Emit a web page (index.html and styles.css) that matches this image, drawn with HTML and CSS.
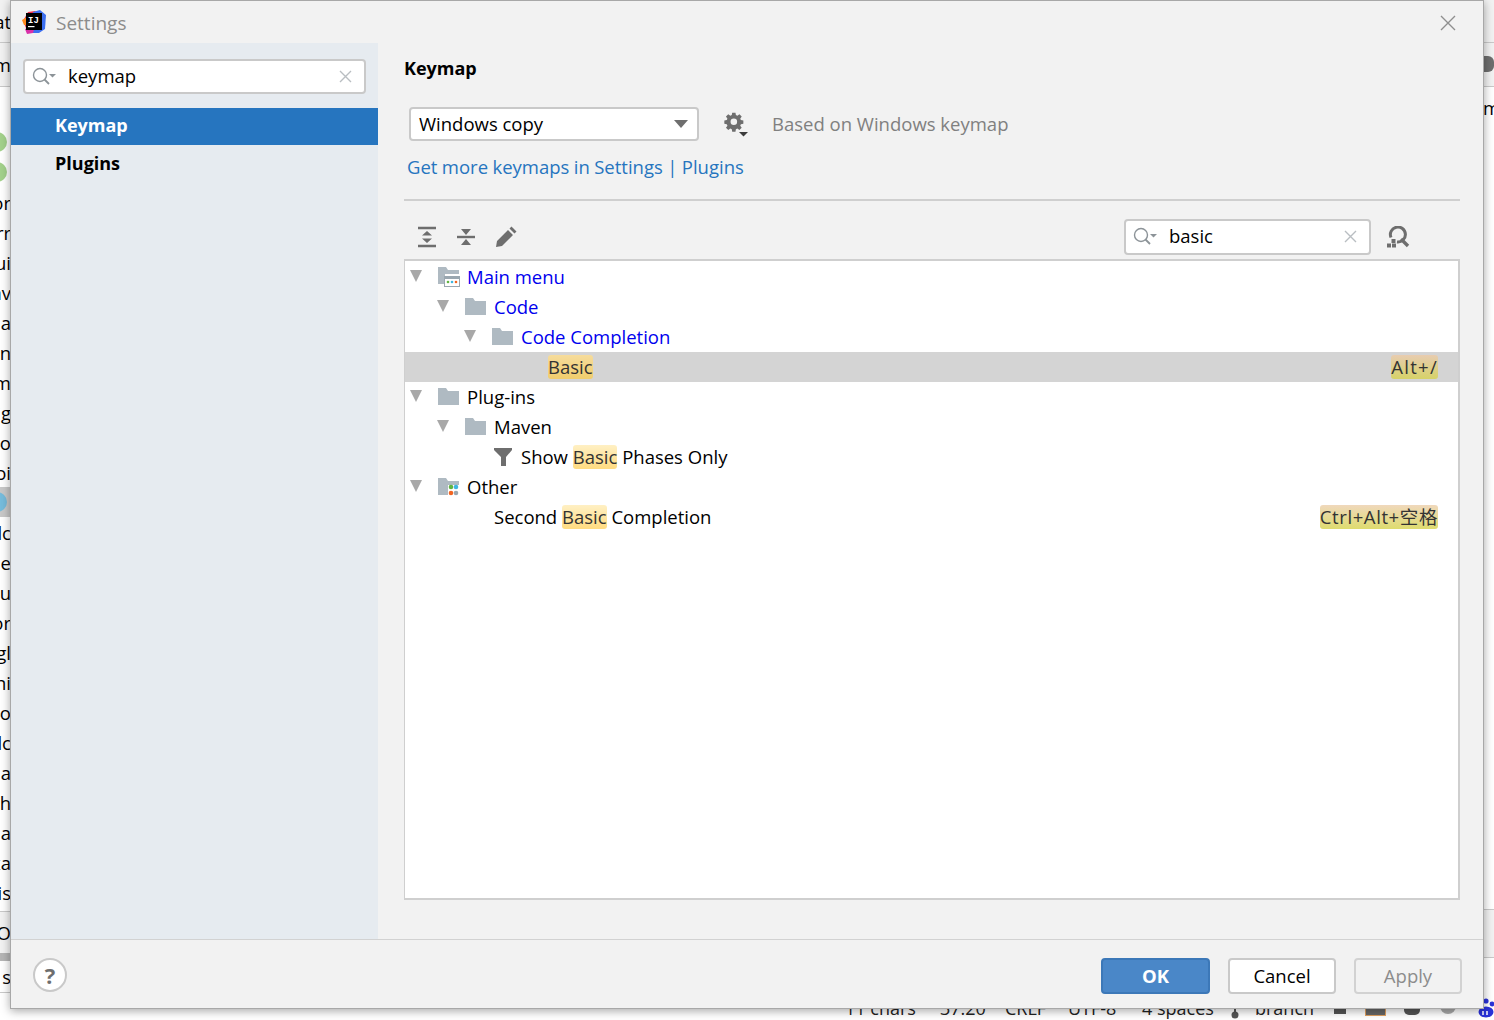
FILE: index.html
```html
<!DOCTYPE html>
<html lang="en">
<head>
<meta charset="utf-8">
<title>Settings</title>
<link rel="stylesheet" href="styles.css">
</head>
<body>
<div class="ide">
  <div class="ide-left">
    <div class="bg-bar bar-a">at</div>
    <div class="bg-bar bar-b">m</div>
    <div class="bg-list">
      <div class="bg-row"><span class="dot dot-green"></span></div>
      <div class="bg-row"><span class="dot dot-green"></span></div>
      <div class="bg-row">or</div><div class="bg-row">rr</div><div class="bg-row">ui</div><div class="bg-row">av</div>
      <div class="bg-row">ia</div><div class="bg-row">n</div><div class="bg-row">m</div><div class="bg-row">ig</div>
      <div class="bg-row">ro</div><div class="bg-row">oi</div>
      <div class="bg-row bg-row-sel"><span class="dot dot-blue"></span></div>
      <div class="bg-row">lc</div><div class="bg-row">e</div><div class="bg-row">u</div><div class="bg-row">or</div>
      <div class="bg-row">gl</div><div class="bg-row">ni</div><div class="bg-row">o</div><div class="bg-row">lc</div>
      <div class="bg-row">a</div><div class="bg-row">h</div><div class="bg-row">a</div><div class="bg-row">xa</div>
      <div class="bg-row">is</div>
    </div>
    <div class="bg-tail">O</div>
    <div class="bg-scroll"></div>
    <div class="bg-tail2">s</div>
  </div>
  <div class="ide-right">
    <div class="r-a"></div>
    <div class="r-b"><span class="blob"></span></div>
    <div class="r-c">m</div>
    <div class="r-d"></div>
    <div class="r-e"></div>
  </div>
  <div class="status">
    <span class="st-a">11 chars</span><span class="st-b">37:20</span><span class="st-c">CRLF</span><span class="st-d">UTF-8</span><span class="st-e">4 spaces</span>
    <svg class="st-branch" width="14" height="24" viewBox="0 0 14 24"><path d="M5 0v18M5 12h8" stroke="#555" stroke-width="2"/><circle cx="5" cy="19" r="3.5" fill="#555"/></svg>
    <span class="st-f">branch</span>
    <span class="st-sq"></span><span class="st-box"></span>
    <span class="st-cam"></span><span class="st-info"></span>
    <svg class="st-paw" width="18" height="22" viewBox="0 0 18 22"><g fill="#2a32d8"><circle cx="9" cy="5" r="2.6"/><circle cx="15" cy="8" r="2.4"/><circle cx="4" cy="9" r="2.4"/><ellipse cx="9" cy="16" rx="7.5" ry="5.5"/></g><path d="M6 15v4M10 15v4" stroke="#fff" stroke-width="1.5"/></svg>
  </div>
</div>

<div class="dialog">
  <header class="titlebar">
    <svg class="logo" width="26" height="26" viewBox="0 0 26 26">
      <path d="M2 12 7 3l7-1 4 3-5 14H5z" fill="#f0304f"/>
      <path d="M1 11l5-3 3 8-6 0z" fill="#ff8a1f"/>
      <path d="M12 3l7-2 6 5-1 14-6 4H9z" fill="#3c6ff0"/>
      <path d="M4 20l10-3-2 7-6 1z" fill="#d92fa8"/>
      <rect x="5" y="4" width="16" height="17" fill="#000"/>
      <text class="logo-text" x="7" y="13.5">IJ</text>
      <rect x="7" y="17" width="6.5" height="1.2" fill="#fff"/>
    </svg>
    <span class="title">Settings</span>
    <svg class="close" width="16" height="16" viewBox="0 0 16 16"><path d="M1 1l14 14M15 1 1 15" stroke="#8f8f8f" stroke-width="1.4" fill="none"/></svg>
  </header>

  <div class="main">
    <aside class="sidebar">
      <div class="search search-side">
        <svg class="search-ico" width="26" height="22" viewBox="0 0 26 22"><circle cx="9" cy="9" r="6.5" fill="none" stroke="#8c9398" stroke-width="1.4"/><path d="M13.5 13.5 18 18" stroke="#8c9398" stroke-width="1.8"/><path d="M18 8h7l-3.5 3.5z" fill="#8c9398"/></svg>
        <span class="search-text">keymap</span>
        <svg class="clear" width="13" height="13" viewBox="0 0 13 13"><path d="M1 1l11 11M12 1 1 12" stroke="#b9bec2" stroke-width="1.4" fill="none"/></svg>
      </div>
      <div class="nav nav-active">Keymap</div>
      <div class="nav">Plugins</div>
    </aside>

    <section class="content">
      <h1 class="heading">Keymap</h1>
      <div class="scheme">
        <div class="combo"><span>Windows copy</span><span class="combo-arrow"></span></div>
        <svg class="gear" width="26" height="26" viewBox="0 0 26 26">
          <path fill="#6e6e6e" fill-rule="evenodd" d="M10 2h4l.5 3 1.8.8 2.5-1.8 2.8 2.8-1.8 2.5.8 1.8 3 .5v4l-3 .5-.8 1.8 1.8 2.5-2.8 2.8-2.5-1.8-1.8.8-.5 3h-4l-.5-3-1.8-.8-2.5 1.8-2.8-2.8 1.8-2.5-.8-1.8-3-.5v-4l3-.5.8-1.8-1.8-2.5L5.2 4l2.5 1.8L9.5 5zM12 9a4 4 0 1 0 0 8 4 4 0 0 0 0-8z" transform="translate(1 0) scale(.82)"/>
          <path d="M16 21h9l-4.5 4.5z" fill="#3c3c3c"/>
        </svg>
        <span class="based">Based on Windows keymap</span>
      </div>
      <a class="link">Get more keymaps in Settings | Plugins</a>
      <div class="rule"></div>
      <div class="toolbar">
        <svg class="tool tool-a" width="20" height="22" viewBox="0 0 20 22"><path d="M1 2h18M1 20h18" stroke="#6e6e6e" stroke-width="2.4"/><path d="M10 5l5 4.5H5zM10 17l-5-4.5h10z" fill="#6e6e6e"/></svg>
        <svg class="tool tool-b" width="20" height="22" viewBox="0 0 20 22"><path d="M1 11h18" stroke="#6e6e6e" stroke-width="2.4"/><path d="M10 9 5 3h10zM10 13l5 6H5z" fill="#6e6e6e"/></svg>
        <svg class="tool tool-c" width="22" height="22" viewBox="0 0 22 22"><path d="M1 21l1-6L13 4l5 5L7 20zM14.5 2.5l2-2 5 5-2 2z" fill="#6e6e6e"/></svg>
        <div class="search search-tool">
          <svg class="search-ico" width="26" height="22" viewBox="0 0 26 22"><circle cx="9" cy="9" r="6.5" fill="none" stroke="#8c9398" stroke-width="1.4"/><path d="M13.5 13.5 18 18" stroke="#8c9398" stroke-width="1.8"/><path d="M18 8h7l-3.5 3.5z" fill="#8c9398"/></svg>
          <span class="search-text">basic</span>
          <svg class="clear" width="13" height="13" viewBox="0 0 13 13"><path d="M1 1l11 11M12 1 1 12" stroke="#b9bec2" stroke-width="1.4" fill="none"/></svg>
        </div>
        <svg class="tool tool-d" width="24" height="22" viewBox="0 0 24 22"><path d="M5 11.5A7.5 7.5 0 1 1 11 16" fill="none" stroke="#6e6e6e" stroke-width="3"/><path d="M15 13l7 7" stroke="#6e6e6e" stroke-width="3.4"/><path d="M5.5 13h4v4h-4zM1 17.5h4v4H1zM6 17.5h4v4H6z" fill="#6e6e6e"/></svg>
      </div>

      <div class="tree">
        <div class="row l0"><span class="tri"></span>
          <svg class="ico" width="23" height="22" viewBox="0 0 23 22"><path d="M1 1h8l2 3h11v4H8v10H1z" fill="#afbac2"/><rect x="7.5" y="10.5" width="15" height="10" fill="#fff" stroke="#9aa7b0"/><rect x="8" y="10" width="14" height="3" fill="#9aa7b0"/><circle cx="11" cy="16" r="1.3" fill="#62b543"/><circle cx="15" cy="16" r="1.3" fill="#40b6e0"/><circle cx="19" cy="16" r="1.3" fill="#f26522"/></svg>
          <span class="t-blue">Main menu</span></div>
        <div class="row l1"><span class="tri"></span>
          <svg class="ico" width="23" height="22" viewBox="0 0 23 22"><path d="M1 2h8l2 3h11v14H1z" fill="#afbac2"/></svg>
          <span class="t-blue">Code</span></div>
        <div class="row l2"><span class="tri"></span>
          <svg class="ico" width="23" height="22" viewBox="0 0 23 22"><path d="M1 2h8l2 3h11v14H1z" fill="#afbac2"/></svg>
          <span class="t-blue">Code Completion</span></div>
        <div class="row leaf3 row-sel"><span class="hit hit-sel">Basic</span><span class="key key-sel">Alt+/</span></div>
        <div class="row l0"><span class="tri"></span>
          <svg class="ico" width="23" height="22" viewBox="0 0 23 22"><path d="M1 2h8l2 3h11v14H1z" fill="#afbac2"/></svg>
          <span>Plug-ins</span></div>
        <div class="row l1"><span class="tri"></span>
          <svg class="ico" width="23" height="22" viewBox="0 0 23 22"><path d="M1 2h8l2 3h11v14H1z" fill="#afbac2"/></svg>
          <span>Maven</span></div>
        <div class="row leaf2">
          <svg class="ico-filter" width="18" height="20" viewBox="0 0 18 20"><path d="M0 1h18v2l-6 7v9H7v-9L0 3z" fill="#6e6e6e"/></svg>
          <span class="txt">Show <span class="hit">Basic</span> Phases Only</span></div>
        <div class="row l0"><span class="tri"></span>
          <svg class="ico" width="23" height="22" viewBox="0 0 23 22"><path d="M1 2h8l2 3h11v4H11v10H1z" fill="#afbac2"/><circle cx="14" cy="11" r="2.3" fill="#62b543"/><circle cx="19" cy="11" r="2.3" fill="#40b6e0"/><circle cx="14" cy="17" r="2.3" fill="#f26522"/><circle cx="19" cy="17" r="2.3" fill="#9aa7b0"/></svg>
          <span>Other</span></div>
        <div class="row leaf1"><span class="txt">Second <span class="hit">Basic</span> Completion</span><span class="key">Ctrl+Alt+空格</span></div>
      </div>
    </section>
  </div>

  <footer class="footer">
    <button class="help">?</button>
    <button class="btn btn-ok">OK</button>
    <button class="btn btn-cancel">Cancel</button>
    <button class="btn btn-apply">Apply</button>
  </footer>
</div>
</body>
</html>
```
FILE: styles.css
```css
* { box-sizing: border-box; }
html, body { margin: 0; height: 100%; }
body {
  width: 1494px; height: 1020px; overflow: hidden; position: relative;
  font-family: "Open Sans", "Noto Sans CJK SC", sans-serif;
  font-size: 18.5px; color: #000; background: #fff;
}

/* IDE behind the dialog */
.ide { position: relative; width: 1494px; height: 1020px; display: flex; justify-content: space-between; }
.ide-left { width: 12px; height: 1000px; overflow: hidden; display: flex; flex-direction: column; }
.bg-bar { height: 43px; background: #f2f2f2; border-bottom: 1px solid #c9c9c9; display: flex; align-items: center; justify-content: flex-end; white-space: nowrap; padding-right: 1px; }
.bar-b { height: 44px; }
.bg-list { padding-top: 40px; }
.bg-row { height: 30px; display: flex; align-items: center; justify-content: flex-end; padding-right: 1px; white-space: nowrap; }
.bg-row-sel { background: #c8c8c8; }
.dot { width: 20px; height: 20px; border-radius: 50%; flex: none; margin-right: 4px; }
.dot-green { background: #a3d18b; }
.dot-blue { background: #76bcdc; }
.bg-tail { height: 42px; margin-top: 4px; background: #f2f2f2; border-top: 1px solid #c9c9c9; display: flex; align-items: center; justify-content: flex-end; padding-right: 1px; }
.bg-scroll { height: 8px; background: #b5b5b5; }
.bg-tail2 { height: 32px; display: flex; align-items: center; justify-content: flex-end; padding-right: 1px; border-bottom: 1px solid #c9c9c9; }
.ide-right { width: 12px; height: 1000px; display: flex; flex-direction: column; }
.r-a { height: 43px; background: #f2f2f2; border-bottom: 1px solid #c9c9c9; }
.r-b { height: 44px; background: #f2f2f2; border-bottom: 1px solid #c9c9c9; display: flex; align-items: center; }
.blob { width: 12px; height: 16px; background: #6e6e6e; border-radius: 0 6px 6px 0; margin-top: -2px; }
.r-c { height: 44px; padding-left: 1px; overflow: hidden; line-height: 42px; }
.r-d { height: 779px; border-bottom: 1px solid #c9c9c9; }
.r-e { height: 48px; background: #f2f2f2; border-bottom: 1px solid #c9c9c9; }

.status { position: absolute; left: 0; right: 0; top: 996px; height: 24px; display: flex; align-items: center; font-size: 18px; color: #222; white-space: nowrap; }
.status > * { position: absolute; }
.st-a { left: 845px; } .st-b { left: 940px; } .st-c { left: 1005px; } .st-d { left: 1068px; } .st-e { left: 1142px; }
.st-branch { left: 1230px; top: 0; }
.st-f { left: 1255px; }
.st-sq { left: 1334px; top: 8px; width: 12px; height: 10px; background: #555; }
.st-box { left: 1365px; top: 6px; width: 21px; height: 14px; background: #666; border: 1px solid #e0a060; }
.st-cam { left: 1404px; top: 6px; width: 16px; height: 13px; background: #555; border-radius: 0 0 5px 5px; }
.st-info { left: 1440px; top: 2px; width: 16px; height: 16px; border-radius: 50%; background: #aaa; }
.st-paw { left: 1477px; top: 0; }

/* Dialog */
.dialog {
  position: absolute; left: 10px; top: 0; width: 1474px; height: 1009px;
  background: #f2f2f2; border: 1px solid #a8a8a8;
  box-shadow: 0 2px 9px rgba(0,0,0,.35);
  display: flex; flex-direction: column;
}
.titlebar { height: 42px; flex: none; display: flex; align-items: center; padding: 0 27px 0 10px; }
.logo { margin-right: 9px; flex: none; }
.logo-text { font: 700 9px "Liberation Mono", monospace; fill: #fff; }
.title { font-size: 19px; color: #8c8c8c; margin-top: 1px; }
.close { margin-left: auto; margin-top: 2px; }

.main { flex: 1; display: flex; min-height: 0; }
.sidebar { width: 367px; flex: none; background: #e6ebf0; padding-top: 16px; }
.search { height: 35px; background: #fff; border: 2px solid #c9c9c9; border-radius: 4px; display: flex; align-items: center; }
.search-side { margin: 0 12px 14px; padding: 0 12px 0 6px; }
.search-ico { flex: none; }
.search-text { margin-left: 11px; line-height: 1; }
.clear { margin-left: auto; }
.nav { height: 37px; padding: 0 0 3px 44px; font-size: 18px; font-weight: 700; display: flex; align-items: center; margin-bottom: 1px; }
.nav-active { background: #2675bf; color: #fff; }

.content { flex: 1; min-width: 0; padding: 0 23px 0 26px; display: flex; flex-direction: column; }
.heading { margin: 12px 0 0; font-size: 18px; line-height: 26px; font-weight: 700; }
.scheme { display: flex; align-items: center; margin: 26px 0 0 5px; height: 34px; line-height: 24px; }
.combo { width: 290px; height: 34px; background: #fff; border: 2px solid #c9c9c9; border-radius: 4px; display: flex; align-items: center; justify-content: space-between; padding: 0 9px 0 8px; }
.combo-arrow { width: 0; height: 0; border-left: 7px solid transparent; border-right: 7px solid transparent; border-top: 8px solid #6e6e6e; }
.gear { margin-left: 24px; flex: none; }
.based { margin: 0 0 0 23px; color: #808080; }
.link { margin: 12px 0 0 3px; line-height: 28px; color: #2675bf; word-spacing: -.4px; }
.rule { height: 2px; background: #cfcfcf; margin-top: 18px; }
.toolbar { height: 58px; display: flex; align-items: center; padding: 13px 0 0 13px; }
.tool-b { margin-left: 19px; } .tool-c { margin-left: 19px; }
.search-tool { margin-left: auto; width: 247px; height: 36px; padding: 0 12px 0 6px; }
.tool-d { margin: 0 50px 0 15px; }

.tree { height: 641px; background: #fff; border: 2px solid #cfcfcf; border-left-width: 1px; padding-top: 1px; }
.row { height: 30px; display: flex; align-items: center; padding-right: 20px; white-space: nowrap; line-height: 24px; }
.row > span:not(.tri), .row .txt { margin-top: -1px; }
.row-sel { background: #d4d4d4; }
.l0 { padding-left: 5px; } .l1 { padding-left: 32px; } .l2 { padding-left: 59px; }
.leaf3 { padding-left: 143px; } .leaf2 { padding-left: 89px; } .leaf1 { padding-left: 89px; }
.tri { width: 0; height: 0; border-left: 6.5px solid transparent; border-right: 6.5px solid transparent; border-top: 12px solid #a8a8a8; margin-right: 15px; margin-top: -2px; flex: none; }
.ico { margin-right: 7px; flex: none; }
.ico-filter { margin-right: 9px; flex: none; }
.t-blue { color: #0000ee; }
.hit { display: inline-block; line-height: 24px; border-radius: 3px; background: linear-gradient(#fff0c4, #ffdb80); color: #333; }
.hit-sel { background: linear-gradient(#f6dc9c, #f0cd6c); }
.key { margin-left: auto; line-height: 24px; border-radius: 3px; background: linear-gradient(#f0d8bc, #dedc6e); color: #333; letter-spacing: .6px; }
.key-sel { background: linear-gradient(#e8ccb0, #d6d268); letter-spacing: 1.3px; }

.footer { height: 69px; flex: none; border-top: 1px solid #d2d2d2; display: flex; align-items: center; padding: 3px 21px 0 22px; }
.help { width: 34px; height: 34px; border-radius: 50%; background: #fff; border: 2px solid #c9c9c9; font: 700 22px "Open Sans", sans-serif; color: #6e6e6e; padding: 0; margin: -2px auto 0 0; }
.btn { width: 108px; height: 36px; border-radius: 4px; font: 18.5px "Open Sans", sans-serif; padding: 0; margin-left: 18px; border: 2px solid #c9c9c9; background: #fff; color: #000; }
.btn-ok { width: 109px; background: #4a87c8; border-color: #3c78b8; color: #fff; font-weight: 700; }
.btn-apply { background: #f2f2f2; color: #8c8c8c; border-color: #d2d2d2; }
```
